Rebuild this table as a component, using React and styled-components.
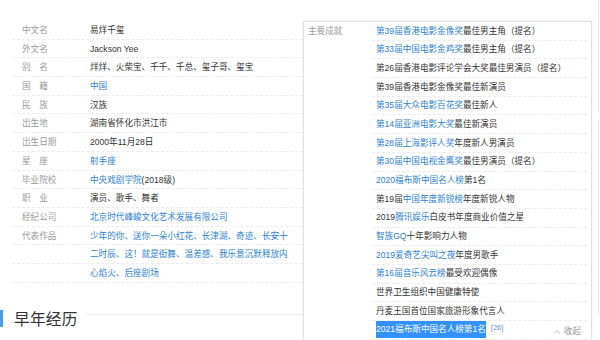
import React from 'react';
import styled, { createGlobalStyle } from 'styled-components';

const GlobalStyle = createGlobalStyle`
  html, body {
    margin: 0;
    padding: 0;
    background: #fff;
    overflow: hidden;
  }
  body {
    font-family: "Liberation Sans", "Noto Sans CJK SC", sans-serif;
    font-size: 8.6px;
    color: #333;
  }
`;

const Page = styled.div`
  display: flex;
  align-items: flex-start;
  width: 600px;
  height: 340px;
  padding-top: 21px;
  box-sizing: border-box;
  overflow: hidden;
`;

const LeftColumn = styled.div`
  width: 303px;
  flex-shrink: 0;
`;

const InfoList = styled.div`
  margin-left: 12px;
`;

const Row = styled.div`
  display: flex;
  height: 18.7px;
  line-height: 18.7px;
  border-bottom: 1px dashed #ebebeb;
  box-sizing: border-box;
  white-space: nowrap;
`;

const Label = styled.div`
  width: 68px;
  padding-left: 10px;
  flex-shrink: 0;
  color: #9a9a9a;
  letter-spacing: ${p => (p.$spread ? '1em' : '0')};
`;

const Value = styled.div`
  color: #333;
`;

const Link = styled.span`
  color: #2f7fd3;
`;

const Heading = styled.div`
  display: flex;
  align-items: center;
  margin-top: 27px;
  height: 18px;
`;

const HeadBar = styled.div`
  width: 3px;
  height: 17px;
  background: #4f9cee;
`;

const HeadText = styled.div`
  margin-left: 11px;
  font-size: 15.7px;
  color: #333;
  letter-spacing: 0.2px;
`;

const HeadLine = styled.div`
  flex: 1;
  height: 1px;
  margin: 0 0 8px 8px;
  background: #ececec;
`;

const AchieveBox = styled.div`
  width: 289px;
  flex-shrink: 0;
  border: 1px solid #e0e0e0;
  box-shadow: 0 0 3px rgba(0, 0, 0, 0.06);
  background: #fff;
  box-sizing: border-box;
  display: flex;
  padding-right: 4px;
`;

const BoxLabel = styled.div`
  width: 68px;
  padding-left: 4px;
  flex-shrink: 0;
  line-height: 18.7px;
  color: #9a9a9a;
`;

const BoxItems = styled.div`
  flex: 1;
  margin-left: -4px;
`;

const BoxItem = styled.div`
  display: flex;
  align-items: center;
  height: 18.7px;
  line-height: 18.7px;
  border-bottom: 1px dashed #ebebeb;
  box-sizing: border-box;
  white-space: nowrap;
  padding-left: 4px;
`;

const Selected = styled.span`
  display: inline-block;
  line-height: 17px;
  background: #3390ff;
  color: #fff;
`;

const Ref = styled.sup`
  font-size: 7.5px;
  color: #6b8fc4;
  margin-left: 5px;
  align-self: flex-start;
  line-height: 13px;
  vertical-align: top;
`;

const Collapse = styled.span`
  margin-left: auto;
  margin-right: 6px;
  display: flex;
  align-items: center;
  gap: 3px;
  color: #999;
  margin-top: 3px;
`;

const Side = styled.div`
  margin-left: 6px;
  margin-top: -21px;
  display: flex;
  flex-direction: column;
  gap: 7px;
`;

const SideCard = styled.div`
  width: 10px;
  height: ${p => p.$h}px;
  border-left: 1px solid #e8e8e8;
`;

const info = [
  { label: '中文名', value: '易烊千玺' },
  { label: '外文名', value: 'Jackson Yee' },
  { label: '别名', spread: true, value: '烊烊、火柴宝、千千、千总、玺子哥、玺宝' },
  { label: '国籍', spread: true, value: <Link>中国</Link> },
  { label: '民族', spread: true, value: '汉族' },
  { label: '出生地', value: '湖南省怀化市洪江市' },
  { label: '出生日期', value: '2000年11月28日' },
  { label: '星座', spread: true, value: <Link>射手座</Link> },
  { label: '毕业院校', value: <><Link>中央戏剧学院</Link>(2018级)</> },
  { label: '职业', spread: true, value: '演员、歌手、舞者' },
  { label: '经纪公司', value: <Link>北京时代峰峻文化艺术发展有限公司</Link> },
  { label: '代表作品', value: <Link>少年的你、送你一朵小红花、长津湖、奇迹、长安十</Link> },
  { label: '', value: <Link>二时辰、这！就是街舞、温差感、我乐意沉默释放内</Link> },
  { label: '', value: <Link>心焰火、后座剧场</Link> },
];

const achievements = [
  ['第39届香港电影金像奖', '最佳男主角（提名）'],
  ['第33届中国电影金鸡奖', '最佳男主角（提名）'],
  ['', '第26届香港电影评论学会大奖最佳男演员（提名）'],
  ['', '第39届香港电影金像奖最佳新演员'],
  ['第35届大众电影百花奖', '最佳新人'],
  ['第14届亚洲电影大奖', '最佳新演员'],
  ['第28届上海影评人奖', '年度新人男演员'],
  ['第30届中国电视金鹰奖', '最佳男演员（提名）'],
  ['2020福布斯中国名人榜', '第1名'],
  ['中国年度新锐榜', '年度新锐人物', '第19届'],
  ['腾讯娱乐', '白皮书年度商业价值之星', '2019'],
  ['智族GQ', '十年影响力人物'],
  ['2019爱奇艺尖叫之夜', '年度男歌手'],
  ['第16届音乐风云榜', '最受欢迎偶像'],
  ['', '世界卫生组织中国健康特使'],
  ['', '丹麦王国首位国家旅游形象代言人'],
];

export default function App() {
  return (
    <>
      <GlobalStyle />
      <Page>
        <LeftColumn>
          <InfoList>
            {info.map((row, i) => (
              <Row key={i}>
                <Label $spread={row.spread}>{row.label}</Label>
                <Value>{row.value}</Value>
              </Row>
            ))}
          </InfoList>
          <Heading>
            <HeadBar />
            <HeadText>早年经历</HeadText>
            <HeadLine />
          </Heading>
        </LeftColumn>

        <AchieveBox>
          <BoxLabel>主要成就</BoxLabel>
          <BoxItems>
            {achievements.map(([link, rest, pre], i) => (
              <BoxItem key={i}>
                {pre}
                {link && <Link>{link}</Link>}
                {rest}
              </BoxItem>
            ))}
            <BoxItem>
              <Selected>2021福布斯中国名人榜第1名</Selected>
              <Ref>[26]</Ref>
              <Collapse>
                <svg width="8" height="5" viewBox="0 0 8 5">
                  <path d="M1 4.5 L4 1.5 L7 4.5" fill="none" stroke="#b5b5b5" strokeWidth="1" />
                </svg>
                收起
              </Collapse>
            </BoxItem>
          </BoxItems>
        </AchieveBox>

        <Side>
          <SideCard $h={113} />
          <SideCard $h={195} />
        </Side>
      </Page>
    </>
  );
}
